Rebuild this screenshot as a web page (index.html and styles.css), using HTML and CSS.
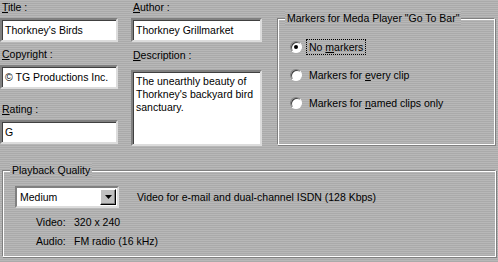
FILE: index.html
```html
<!DOCTYPE html>
<html>
<head>
<meta charset="utf-8">
<link rel="stylesheet" href="styles.css">
</head>
<body>
<div class="dlg">
  <div class="top">
    <div class="col col1">
      <div class="field">
        <div class="lbl"><u>T</u>itle :</div>
        <div class="edit">Thorkney's Birds</div>
      </div>
      <div class="field">
        <div class="lbl"><u>C</u>opyright :</div>
        <div class="edit">© TG Productions Inc.</div>
      </div>
      <div class="field rating">
        <div class="lbl rating-lbl"><u>R</u>ating :</div>
        <div class="edit">G</div>
      </div>
    </div>
    <div class="col col2">
      <div class="field">
        <div class="lbl"><u>A</u>uthor :</div>
        <div class="edit">Thorkney Grillmarket</div>
      </div>
      <div class="field">
        <div class="lbl desc-lbl"><u>D</u>escription :</div>
        <div class="edit area">The unearthly beauty of Thorkney's backyard bird sanctuary.</div>
      </div>
    </div>
    <div class="group markers">
      <div class="legend">Markers for Meda Player "Go To Bar"</div>
      <div class="radios">
        <div class="radio-row"><span class="radio checked"></span><span class="rtext focus">No <u>m</u>arkers</span></div>
        <div class="radio-row"><span class="radio"></span><span class="rtext">Markers for <u>e</u>very clip</span></div>
        <div class="radio-row"><span class="radio"></span><span class="rtext">Markers for <u>n</u>amed clips only</span></div>
      </div>
    </div>
  </div>
  <div class="group playback">
    <div class="legend">Playback Quality</div>
    <div class="pb-row">
      <div class="combo"><span class="combo-text">Medium</span><span class="combo-btn"><svg width="7" height="4" viewBox="0 0 7 4"><path d="M0 0H7L3.5 4Z" fill="#000"/></svg></span></div>
      <div class="pb-desc">Video for e-mail and dual-channel ISDN (128 Kbps)</div>
    </div>
    <div class="info">
      <div class="info-row"><span class="ik">Video:</span><span>320 x 240</span></div>
      <div class="info-row"><span class="ik">Audio:</span><span>FM radio (16 kHz)</span></div>
    </div>
  </div>
</div>
</body>
</html>
```

FILE: styles.css
```css
html, body {
  margin: 0;
  padding: 0;
}
body {
  width: 498px;
  height: 262px;
  overflow: hidden;
  font-family: "Liberation Sans", Arial, sans-serif;
  font-size: 10.5px;
  color: #000;
  background: repeating-linear-gradient(to bottom, #b8b8b8 0px, #b8b8b8 1px, #aaaaaa 1px, #aaaaaa 2px);
}
.dlg {
  display: flex;
  flex-direction: column;
}
.top {
  display: flex;
  align-items: flex-start;
}
.col {
  display: flex;
  flex-direction: column;
}
.col1 {
  width: 118px;
}
.col2 {
  width: 131px;
  margin-left: 13px;
}
.field {
  display: flex;
  flex-direction: column;
}
.lbl {
  height: 13px;
  line-height: 13px;
  padding-left: 2px;
  margin-top: 1px;
  margin-bottom: 4px;
  white-space: nowrap;
}
.field + .field .lbl {
  margin-top: 6px;
}
.field + .field .rating-lbl {
  margin-top: 14px;
}
.field + .field .desc-lbl {
  margin-top: 7px;
  margin-bottom: 8px;
}
.edit {
  height: 20px;
  line-height: 20px;
  background: #fff;
  border-top: 2px solid #808080;
  border-left: 2px solid #808080;
  border-right: 2px solid #dcdcdc;
  border-bottom: 2px solid #dcdcdc;
  box-shadow: inset 1px 1px 0 #404040;
  padding-left: 3px;
  white-space: nowrap;
  overflow: hidden;
}
.edit.area {
  line-height: 13px;
  padding: 3px 4px 0 3px;
  white-space: normal;
  box-sizing: border-box;
  height: 76px;
}
.group {
  position: relative;
  border-top: 1px solid #808080;
  border-left: 1px solid #808080;
  border-right: 1px solid #fff;
  border-bottom: 1px solid #fff;
  box-shadow: inset 1px 1px 0 #fff, 1px 1px 0 #808080;
}
.legend {
  position: absolute;
  top: -8px;
  left: 7px;
  padding: 0 2px;
  line-height: 14px;
  background: repeating-linear-gradient(to bottom, #b8b8b8 0px, #b8b8b8 1px, #aaaaaa 1px, #aaaaaa 2px);
  white-space: nowrap;
}
.markers {
  margin-left: 15px;
  margin-top: 18px;
  width: 216px;
  height: 125px;
}
.radios {
  display: flex;
  flex-direction: column;
  gap: 11px;
  padding-top: 19px;
  padding-left: 12px;
}
.radio-row {
  display: flex;
  align-items: center;
  height: 17px;
}
.radio {
  width: 12px;
  height: 12px;
  border-radius: 50%;
  background: #fff;
  box-sizing: border-box;
  border: 1px solid;
  border-color: #808080 #fff #fff #808080;
  box-shadow: inset 1px 1px 0 #404040;
  margin-right: 6px;
  position: relative;
}
.radio.checked::after {
  content: "";
  position: absolute;
  left: 3px;
  top: 3px;
  width: 4px;
  height: 4px;
  border-radius: 50%;
  background: #000;
}
.rtext {
  padding: 1px 2px;
  margin-left: -2px;
  border: 1px solid transparent;
}
.rtext.focus {
  border: 1px dotted #000;
}
.playback {
  margin: 24px 2px 0 2px;
  height: 85px;
}
.pb-row {
  display: flex;
  align-items: center;
  margin-top: 15px;
  margin-left: 12px;
}
.combo {
  width: 104px;
  height: 22px;
  box-sizing: border-box;
  background: #fff;
  border-top: 2px solid #808080;
  border-left: 2px solid #808080;
  border-right: 2px solid #dcdcdc;
  border-bottom: 2px solid #dcdcdc;
  display: flex;
  align-items: center;
  justify-content: space-between;
}
.combo-text {
  padding-left: 3px;
}
.combo-btn {
  width: 16px;
  height: 16px;
  box-sizing: border-box;
  background: #c0c0c0;
  border-top: 1px solid #fff;
  border-left: 1px solid #fff;
  border-right: 1px solid #000;
  border-bottom: 1px solid #000;
  box-shadow: inset -1px -1px 0 #808080;
  display: flex;
  align-items: center;
  justify-content: center;
  margin-right: 1px;
}
.pb-desc {
  margin-left: 18px;
}
.info {
  display: flex;
  flex-direction: column;
  gap: 6px;
  margin-top: 8px;
  margin-left: 33px;
}
.info-row {
  display: flex;
  height: 13px;
  line-height: 13px;
}
.ik {
  width: 38px;
}
```
